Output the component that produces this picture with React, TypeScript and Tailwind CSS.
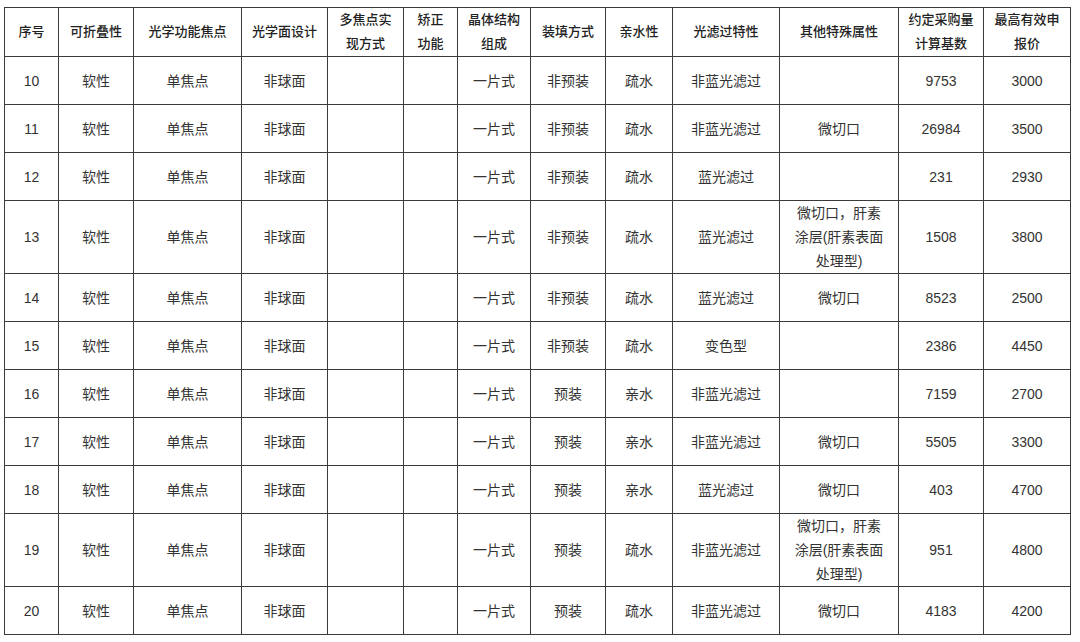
import React from 'react';

type Row = {
  no: number;
  fold: string;
  focus: string;
  surface: string;
  multi: string;
  correct: string;
  crystal: string;
  fill: string;
  water: string;
  filter: string;
  other: string[];
  base: number;
  price: number;
};

const COLS = [54, 75, 108, 86, 76, 54, 73, 75, 67, 107, 119, 85, 87];

const HEAD: string[][] = [
  ['序号'],
  ['可折叠性'],
  ['光学功能焦点'],
  ['光学面设计'],
  ['多焦点实', '现方式'],
  ['矫正', '功能'],
  ['晶体结构', '组成'],
  ['装填方式'],
  ['亲水性'],
  ['光滤过特性'],
  ['其他特殊属性'],
  ['约定采购量', '计算基数'],
  ['最高有效申', '报价'],
];

const LONG = ['微切口，肝素', '涂层(肝素表面', '处理型)'];

const mk = (no: number, fill: string, water: string, filter: string, other: string[], base: number, price: number): Row => ({
  no,
  fold: '软性',
  focus: '单焦点',
  surface: '非球面',
  multi: '',
  correct: '',
  crystal: '一片式',
  fill,
  water,
  filter,
  other,
  base,
  price,
});

const ROWS: Row[] = [
  mk(10, '非预装', '疏水', '非蓝光滤过', [], 9753, 3000),
  mk(11, '非预装', '疏水', '非蓝光滤过', ['微切口'], 26984, 3500),
  mk(12, '非预装', '疏水', '蓝光滤过', [], 231, 2930),
  mk(13, '非预装', '疏水', '蓝光滤过', LONG, 1508, 3800),
  mk(14, '非预装', '疏水', '蓝光滤过', ['微切口'], 8523, 2500),
  mk(15, '非预装', '疏水', '变色型', [], 2386, 4450),
  mk(16, '预装', '亲水', '非蓝光滤过', [], 7159, 2700),
  mk(17, '预装', '亲水', '非蓝光滤过', ['微切口'], 5505, 3300),
  mk(18, '预装', '亲水', '蓝光滤过', ['微切口'], 403, 4700),
  mk(19, '预装', '疏水', '非蓝光滤过', LONG, 951, 4800),
  mk(20, '预装', '疏水', '非蓝光滤过', ['微切口'], 4183, 4200),
];

const cell = 'border border-[#3a3a3a] text-center align-middle p-0';

export default function App() {
  return (
    <div
      className="w-[1080px] h-[642px] bg-white pl-[4px] pt-[7px] overflow-hidden"
      style={{ fontFamily: '"Liberation Sans", "Noto Sans CJK SC", sans-serif' }}
    >
      <table className="table-fixed border-collapse w-[1066px] text-[#333]">
        <colgroup>
          {COLS.map((w, i) => (
            <col key={i} style={{ width: w }} />
          ))}
        </colgroup>
        <thead>
          <tr className="h-[49px]">
            {HEAD.map((lines, i) => (
              <th key={i} className={`${cell} text-[13px] font-medium leading-[24px] text-[#222]`}>
                {lines.map((l, j) => (
                  <div key={j}>{l}</div>
                ))}
              </th>
            ))}
          </tr>
        </thead>
        <tbody className="text-[14px] leading-[24px]">
          {ROWS.map((r) => (
            <tr key={r.no} className={r.other.length > 1 ? 'h-[72px]' : 'h-[48px]'}>
              <td className={cell}>{r.no}</td>
              <td className={cell}>{r.fold}</td>
              <td className={cell}>{r.focus}</td>
              <td className={cell}>{r.surface}</td>
              <td className={cell}>{r.multi}</td>
              <td className={cell}>{r.correct}</td>
              <td className={cell}>{r.crystal}</td>
              <td className={cell}>{r.fill}</td>
              <td className={cell}>{r.water}</td>
              <td className={cell}>{r.filter}</td>
              <td className={cell}>
                {r.other.map((l, j) => (
                  <div key={j}>{l}</div>
                ))}
              </td>
              <td className={cell}>{r.base}</td>
              <td className={cell}>{r.price}</td>
            </tr>
          ))}
        </tbody>
      </table>
    </div>
  );
}
